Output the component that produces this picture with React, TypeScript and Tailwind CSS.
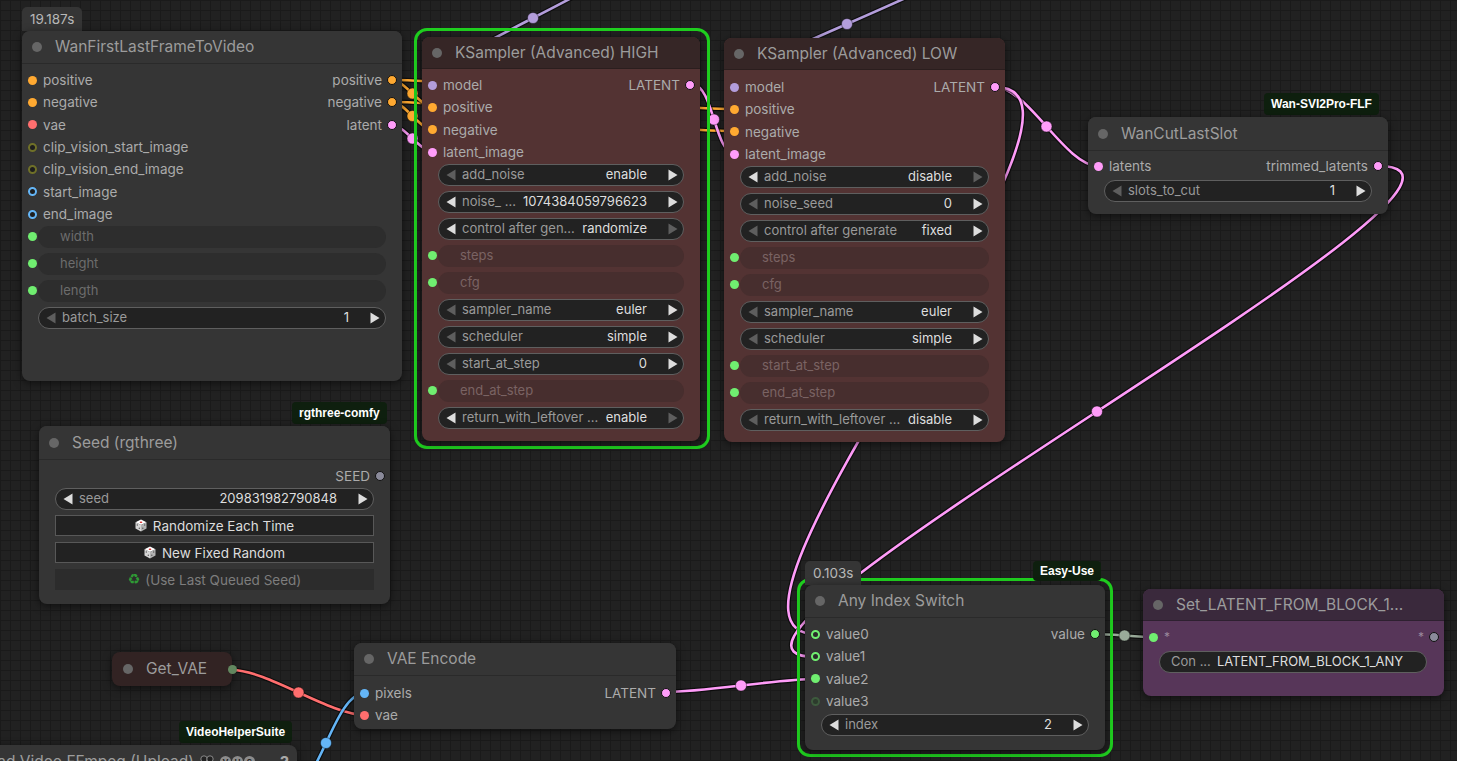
import React from "react";

// link colours by type
const COND = "#ffa931";
const LAT = "#ff9cf9";
const MODEL = "#b39ddb";
const VAE = "#ff6e6e";
const IMG = "#64b5f6";

type LinkDef = { a: [number, number]; b: [number, number]; c: string };

const links: LinkDef[] = [
  { a: [633, -49], b: [433, 85], c: MODEL },
  { a: [959, -39], b: [735, 87], c: MODEL },
  { a: [392, 80], b: [735, 109], c: COND },
  { a: [392, 102], b: [735, 131], c: COND },
  { a: [392, 80], b: [433, 107], c: COND },
  { a: [392, 102], b: [433, 130], c: COND },
  { a: [392, 125], b: [433, 152], c: LAT },
  { a: [693, 85], b: [735, 154], c: LAT },
  { a: [995, 87], b: [1098, 166], c: LAT },
  { a: [995, 87], b: [816, 634], c: LAT },
  { a: [1378, 166], b: [816, 657], c: LAT },
  { a: [666, 692], b: [816, 679], c: LAT },
  { a: [1095, 634], b: [1154, 637], c: "#9aab9a" },
  { a: [232, 670], b: [365, 715], c: VAE },
  { a: [287, 793], b: [365, 693], c: IMG },
];

function Links() {
  return (
    <svg className="absolute left-0 top-0" width="1457" height="761">
      {links.map((l, i) => {
        const [ax, ay] = l.a;
        const [bx, by] = l.b;
        const d = Math.hypot(bx - ax, by - ay) * 0.25;
        const p = `M${ax},${ay} C${ax + d},${ay} ${bx - d},${by} ${bx},${by}`;
        return (
          <g key={i}>
            <path d={p} fill="none" stroke="#000" strokeOpacity="0.55" strokeWidth="5" />
            <path d={p} fill="none" stroke={l.c} strokeWidth="2.6" />
            <circle cx={(ax + bx) / 2} cy={(ay + by) / 2} r="5.5" fill={l.c} stroke="#000" strokeOpacity="0.4" />
          </g>
        );
      })}
    </svg>
  );
}

function Node({
  pos,
  title,
  head = "bg-[#353535]",
  body = "bg-[#353535]",
  th = "h-[33px]",
  pad = "pt-[5px]",
  children,
}: {
  pos: string;
  title: string;
  head?: string;
  body?: string;
  th?: string;
  pad?: string;
  children?: React.ReactNode;
}) {
  return (
    <div className={`absolute ${pos} ${body} rounded-[8px] shadow-[0_2px_8px_rgba(0,0,0,0.55)] flex flex-col overflow-hidden`}>
      <div className={`${th} ${head} flex items-center shrink-0 border-b border-[#00000033]`}>
        <span className="ml-[10px] w-[10px] h-[10px] rounded-full bg-[#666666]" />
        <span className="ml-[13px] text-[15.5px] text-[#9c9c9c] whitespace-nowrap">{title}</span>
      </div>
      <div className={`${pad} flex flex-col`}>{children}</div>
    </div>
  );
}

function Row({
  inDot,
  inLabel,
  outLabel,
  outDot,
  h = "h-[22.33px]",
}: {
  inDot?: string;
  inLabel?: string;
  outLabel?: string;
  outDot?: string;
  h?: string;
}) {
  return (
    <div className={`${h} flex items-center justify-between text-[13.5px] text-[#ababab] whitespace-nowrap`}>
      <div className="flex items-center">
        {inDot ? <span className={`ml-[6px] w-[9px] h-[9px] rounded-full ${inDot}`} /> : <span className="ml-[6px] w-[9px]" />}
        {inLabel ? <span className="ml-[6px]">{inLabel}</span> : null}
      </div>
      <div className="flex items-center">
        {outLabel ? <span className="mr-[5px]">{outLabel}</span> : null}
        {outDot ? <span className={`mr-[5px] w-[10px] h-[10px] rounded-full border border-[#111111] ${outDot}`} /> : null}
      </div>
    </div>
  );
}

function Tri({ dir, on }: { dir: "l" | "r"; on: boolean }) {
  return (
    <svg width="10" height="12" viewBox="0 0 10 12" className="shrink-0">
      <polygon points={dir === "l" ? "9.5,0.5 9.5,11.5 0.5,6" : "0.5,0.5 0.5,11.5 9.5,6"} fill={on ? "#dddddd" : "#5e5e5e"} />
    </svg>
  );
}

function Widget({
  label,
  value,
  l = true,
  r = true,
  mt = "",
  px = "px-[16px]",
}: {
  label: string;
  value: string;
  l?: boolean;
  r?: boolean;
  mt?: string;
  px?: string;
}) {
  return (
    <div className={`h-[27px] flex items-center ${px} ${mt}`}>
      <div className="h-[22px] flex-1 rounded-full border border-[#5f5f5f] bg-[#222222] flex items-center pl-[7px] pr-[5px] text-[13px] whitespace-nowrap">
        <Tri dir="l" on={l} />
        <span className="ml-[6px] text-[#9a9a9a] flex-1 overflow-hidden">{label}</span>
        <span className="mr-[21px] text-[#dedede]">{value}</span>
        <Tri dir="r" on={r} />
      </div>
    </div>
  );
}

function Linked({ label, bg, text, mt = "" }: { label: string; bg: string; text: string; mt?: string }) {
  return (
    <div className={`h-[27px] flex items-center pr-[16px] ${mt}`}>
      <span className="ml-[6px] w-[9px] h-[9px] rounded-full bg-[#70ee70]" />
      <div className={`ml-[1px] h-[22px] flex-1 rounded-full ${bg} flex items-center pl-[22px] text-[13px] ${text}`}>{label}</div>
    </div>
  );
}

function Badge({ pos, children }: { pos: string; children: React.ReactNode }) {
  return (
    <div className={`absolute ${pos} h-[22px] px-[7px] rounded-[4px] bg-[#0e1f0e] text-white text-[12px] font-bold font-['Liberation_Sans',Arial,sans-serif] flex items-center whitespace-nowrap`}>
      {children}
    </div>
  );
}

function Timer({ pos, children }: { pos: string; children: React.ReactNode }) {
  return (
    <div className={`absolute ${pos} h-[24px] px-[8px] rounded-t-[5px] bg-[#353535] text-[#b8b8b8] text-[13.5px] flex items-center`}>
      {children}
    </div>
  );
}

function Dice() {
  return (
    <svg width="12" height="13" viewBox="0 0 12 13" className="mr-[6px]">
      <polygon points="6,0.5 11.5,3.2 6,6 0.5,3.2" fill="#ffffff" />
      <polygon points="0.5,3.2 6,6 6,12.5 0.5,9.6" fill="#d6d6d6" />
      <polygon points="11.5,3.2 6,6 6,12.5 11.5,9.6" fill="#b2b2b2" />
      <ellipse cx="6" cy="3.2" rx="1.3" ry="0.8" fill="#d42020" />
      <circle cx="2.3" cy="6" r="0.7" fill="#555" />
      <circle cx="4.3" cy="9.3" r="0.7" fill="#555" />
      <circle cx="9.7" cy="6" r="0.7" fill="#555" />
      <circle cx="7.8" cy="9.3" r="0.7" fill="#555" />
    </svg>
  );
}

function Btn({ children, plain = false }: { children: React.ReactNode; plain?: boolean }) {
  return (
    <div className="h-[27px] flex items-center px-[16px]">
      <div
        className={`h-[21px] flex-1 flex items-center justify-center text-[13.5px] ${
          plain ? "bg-[#2c2c2c] text-[#7d7d7d]" : "bg-[#222222] border border-[#585858] text-[#dddddd]"
        }`}
      >
        {children}
      </div>
    </div>
  );
}

const BR_LINK = "bg-[#472e2e]";
const BR_TXT = "text-[#7a6363]";
const GR_LINK = "bg-[#2d2d2d]";
const GR_TXT = "text-[#6c6c6c]";

export default function App() {
  return (
    <div className="relative w-[1457px] h-[761px] overflow-hidden bg-[#212121] bg-[linear-gradient(#1a1a1a_1px,transparent_1px),linear-gradient(90deg,#1a1a1a_1px,transparent_1px)] bg-[size:10px_10px] font-['Inter','Liberation_Sans',sans-serif]">
      <Links />

      {/* selection outlines */}
      <div className="absolute left-[414px] top-[28px] w-[296px] h-[421px] rounded-[13px] border-[3px] border-[#1fcf1f]" />
      <div className="absolute left-[797px] top-[578px] w-[316px] h-[179px] rounded-[13px] border-[3px] border-[#1fcf1f]" />

      {/* WanFirstLastFrameToVideo */}
      <Timer pos="left-[22px] top-[7px]">19.187s</Timer>
      <Node pos="left-[22px] top-[31px] w-[380px] h-[350px]" title="WanFirstLastFrameToVideo">
        <Row inDot="bg-[#ffa931]" inLabel="positive" outLabel="positive" outDot="bg-[#ffa931]" />
        <Row inDot="bg-[#ffa931]" inLabel="negative" outLabel="negative" outDot="bg-[#ffa931]" />
        <Row inDot="bg-[#ff6e6e]" inLabel="vae" outLabel="latent" outDot="bg-[#ff9cf9]" />
        <Row inDot="bg-[#1e1e1e] border-2 border-[#6f7028]" inLabel="clip_vision_start_image" />
        <Row inDot="bg-[#1e1e1e] border-2 border-[#6f7028]" inLabel="clip_vision_end_image" />
        <Row inDot="bg-[#1e1e1e] border-2 border-[#64b5f6]" inLabel="start_image" />
        <Row inDot="bg-[#1e1e1e] border-2 border-[#64b5f6]" inLabel="end_image" />
        <Linked label="width" bg={GR_LINK} text={GR_TXT} mt="mt-[-2px]" />
        <Linked label="height" bg={GR_LINK} text={GR_TXT} />
        <Linked label="length" bg={GR_LINK} text={GR_TXT} />
        <Widget label="batch_size" value="1" l={false} />
      </Node>

      {/* KSampler HIGH */}
      <Node
        pos="left-[422px] top-[37px] w-[278px] h-[404px]"
        title="KSampler (Advanced) HIGH"
        head="bg-[#362626]"
        body="bg-[#533333]"
        th="h-[32px]"
      >
        <Row inDot="bg-[#b39ddb]" inLabel="model" outLabel="LATENT" outDot="bg-[#ff9cf9]" />
        <Row inDot="bg-[#ffa931]" inLabel="positive" />
        <Row inDot="bg-[#ffa931]" inLabel="negative" />
        <Row inDot="bg-[#ff9cf9]" inLabel="latent_image" />
        <Widget label="add_noise" value="enable" l={false} mt="mt-[-2px]" />
        <Widget label="noise_ ..." value="1074384059796623" />
        <Widget label="control after gen..." value="randomize" r={false} />
        <Linked label="steps" bg={BR_LINK} text={BR_TXT} />
        <Linked label="cfg" bg={BR_LINK} text={BR_TXT} />
        <Widget label="sampler_name" value="euler" l={false} />
        <Widget label="scheduler" value="simple" l={false} />
        <Widget label="start_at_step" value="0" l={false} />
        <Linked label="end_at_step" bg={BR_LINK} text={BR_TXT} />
        <Widget label="return_with_leftover ..." value="enable" r={false} />
      </Node>

      {/* KSampler LOW */}
      <Node
        pos="left-[724px] top-[38px] w-[281px] h-[404px]"
        title="KSampler (Advanced) LOW"
        head="bg-[#362626]"
        body="bg-[#533333]"
        th="h-[32px]"
        pad="pt-[6px]"
      >
        <Row inDot="bg-[#b39ddb]" inLabel="model" outLabel="LATENT" outDot="bg-[#ff9cf9]" />
        <Row inDot="bg-[#ffa931]" inLabel="positive" />
        <Row inDot="bg-[#ffa931]" inLabel="negative" />
        <Row inDot="bg-[#ff9cf9]" inLabel="latent_image" />
        <Widget label="add_noise" value="disable" r={false} mt="mt-[-2px]" />
        <Widget label="noise_seed" value="0" l={false} />
        <Widget label="control after generate" value="fixed" l={false} />
        <Linked label="steps" bg={BR_LINK} text={BR_TXT} />
        <Linked label="cfg" bg={BR_LINK} text={BR_TXT} />
        <Widget label="sampler_name" value="euler" l={false} />
        <Widget label="scheduler" value="simple" l={false} />
        <Linked label="start_at_step" bg={BR_LINK} text={BR_TXT} />
        <Linked label="end_at_step" bg={BR_LINK} text={BR_TXT} />
        <Widget label="return_with_leftover ..." value="disable" l={false} />
      </Node>

      {/* WanCutLastSlot */}
      <Badge pos="left-[1264px] top-[93px]">Wan-SVI2Pro-FLF</Badge>
      <Node pos="left-[1088px] top-[117px] w-[300px] h-[97px]" title="WanCutLastSlot" th="h-[34px]" pad="pt-[4px]">
        <Row inDot="bg-[#ff9cf9]" inLabel="latents" outLabel="trimmed_latents" outDot="bg-[#ff9cf9]" />
        <Widget label="slots_to_cut" value="1" l={false} />
      </Node>

      {/* Seed (rgthree) */}
      <Badge pos="left-[292px] top-[402px]">rgthree-comfy</Badge>
      <Node pos="left-[39px] top-[426px] w-[351px] h-[178px]" title="Seed (rgthree)" th="h-[34px]">
        <Row outLabel="SEED" outDot="bg-[#8a8a9a]" />
        <Widget label="seed" value="209831982790848" mt="mt-[-2px]" />
        <Btn>
          <Dice />
          Randomize Each Time
        </Btn>
        <Btn>
          <Dice />
          New Fixed Random
        </Btn>
        <Btn plain>
          <span className="mr-[5px] text-[#2f9a35] font-['DejaVu_Sans',sans-serif] text-[14px]">♻</span>
          (Use Last Queued Seed)
        </Btn>
      </Node>

      {/* Get_VAE */}
      <div className="absolute left-[112px] top-[652px] w-[120px] h-[34px] rounded-[8px] bg-[#322323] shadow-[0_2px_8px_rgba(0,0,0,0.55)] flex items-center">
        <span className="ml-[11px] w-[10px] h-[10px] rounded-full bg-[#666666]" />
        <span className="ml-[13px] text-[15.5px] text-[#9c9c9c]">Get_VAE</span>
        <span className="absolute right-[-5px] top-[13px] w-[9px] h-[9px] rounded-full bg-[#62875f]" />
      </div>

      {/* VAE Encode */}
      <Node pos="left-[354px] top-[643px] w-[322px] h-[86px]" title="VAE Encode" pad="pt-[6px]">
        <Row inDot="bg-[#64b5f6]" inLabel="pixels" outLabel="LATENT" outDot="bg-[#ff9cf9]" />
        <Row inDot="bg-[#ff6e6e]" inLabel="vae" />
      </Node>

      {/* Load Video (cut off) */}
      <Badge pos="left-[179px] top-[721px]">VideoHelperSuite</Badge>
      <div className="absolute left-[-12px] top-[745px] w-[309px] h-[60px] rounded-[8px] bg-[#353535] shadow-[0_2px_8px_rgba(0,0,0,0.55)]">
        <div className="h-[33px] flex items-center whitespace-nowrap">
          <span className="ml-[-9px] text-[15.5px] text-[#9c9c9c]">Load Video FFmpeg (Upload)</span>
          <svg width="18" height="14" viewBox="0 0 18 14" className="ml-[5px]">
            <circle cx="5" cy="4" r="3.2" fill="#222" stroke="#888" />
            <circle cx="11" cy="4" r="3.2" fill="#222" stroke="#888" />
            <rect x="2" y="7" width="11" height="6" rx="1" fill="#222" stroke="#888" />
            <polygon points="13,9 17,7 17,13 13,11" fill="#888" />
          </svg>
          <span className="ml-[3px] flex gap-[1px]">
            <span className="w-[11px] h-[11px] rounded-full bg-[#8c8c8c] text-[8px] text-[#222] font-bold flex items-center justify-center">V</span>
            <span className="w-[11px] h-[11px] rounded-full bg-[#8c8c8c] text-[8px] text-[#222] font-bold flex items-center justify-center">H</span>
            <span className="w-[11px] h-[11px] rounded-full bg-[#8c8c8c] text-[8px] text-[#222] font-bold flex items-center justify-center">S</span>
          </span>
          <span className="ml-auto mr-[8px] text-[16px] font-bold text-[#a8a8a8]">?</span>
        </div>
      </div>

      {/* Any Index Switch */}
      <Timer pos="left-[805px] top-[561px]">0.103s</Timer>
      <div className="absolute left-[1033px] top-[561px] h-[20px] px-[7px] rounded-[4px] bg-[#0e1f0e] text-white text-[12px] font-bold font-['Liberation_Sans',Arial,sans-serif] flex items-center">
        Easy-Use
      </div>
      <Node pos="left-[805px] top-[585px] w-[300px] h-[165px]" title="Any Index Switch">
        <Row inDot="bg-[#2a2a2a] border-2 border-[#70ee70]" inLabel="value0" outLabel="value" outDot="bg-[#70ee70]" />
        <Row inDot="bg-[#2a2a2a] border-2 border-[#70ee70]" inLabel="value1" />
        <Row inDot="bg-[#70ee70]" inLabel="value2" />
        <Row inDot="bg-[#2c3b2c] border-2 border-[#3d5a3d]" inLabel="value3" />
        <Widget label="index" value="2" mt="mt-[-1px]" />
      </Node>

      {/* Set_LATENT_FROM_BLOCK_1 */}
      <Node
        pos="left-[1143px] top-[589px] w-[301px] h-[107px]"
        title="Set_LATENT_FROM_BLOCK_1..."
        head="bg-[#3a293c]"
        body="bg-[#573659]"
        th="h-[32px]"
      >
        <div className="h-[22.33px] flex items-center justify-between text-[12px] text-[#9a8a9c]">
          <div className="flex items-center">
            <span className="ml-[6px] w-[9px] h-[9px] rounded-full bg-[#70ee70]" />
            <span className="ml-[6px]">*</span>
          </div>
          <div className="flex items-center">
            <span className="mr-[5px]">*</span>
            <span className="mr-[5px] w-[10px] h-[10px] rounded-full border border-[#111111] bg-[#8a8a9a]" />
          </div>
        </div>
        <div className="h-[27px] flex items-center pl-[16px] pr-[17px]">
          <div className="h-[22px] flex-1 rounded-full border border-[#5f5f5f] bg-[#222222] flex items-center pl-[11px] text-[13px] whitespace-nowrap">
            <span className="text-[#9a9a9a]">Con ...</span>
            <span className="ml-[6px] text-[#dedede]">LATENT_FROM_BLOCK_1_ANY</span>
          </div>
        </div>
      </Node>
    </div>
  );
}
